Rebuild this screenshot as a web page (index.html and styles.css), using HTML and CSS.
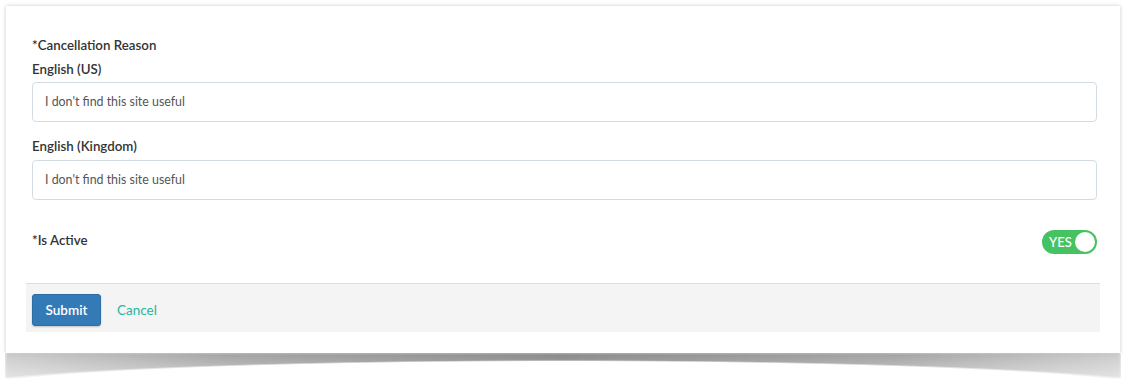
FILE: index.html
```html
<!DOCTYPE html>
<html lang="en">
<head>
<meta charset="utf-8">
<title>Cancellation Reason</title>
<link rel="stylesheet" href="styles.css">
</head>
<body>
<div class="page">
  <form class="card">
    <div class="section-title">*Cancellation Reason</div>
    <label class="label">English (US)</label>
    <div class="input">I don't find this site useful</div>
    <label class="label label-gap">English (Kingdom)</label>
    <div class="input">I don't find this site useful</div>
    <div class="active-row">
      <span class="label">*Is Active</span>
      <span class="toggle"><span class="toggle-text">YES</span><span class="knob"></span></span>
    </div>
    <div class="footer">
      <button type="button" class="btn-submit">Submit</button>
      <a class="cancel">Cancel</a>
    </div>
  </form>
</div>
</body>
</html>
```
FILE: styles.css
```css
html {
  background: #fff;
}
body {
  margin: 0;
  font-family: Lato, "Open Sans", "Liberation Sans", sans-serif;
  color: #333;
}
.page {
  padding: 6px 14px 30px 6px;
}
.card {
  position: relative;
  display: block;
  background: #fff;
  padding: 29px 23px 21px 26px;
  box-shadow: 0 0 4px rgba(0, 0, 0, 0.22);
}
/* curved drop shadow under the card */
.card::after {
  content: "";
  position: absolute;
  z-index: -1;
  left: -1px;
  right: -1px;
  top: 100%;
  height: 26px;
  background:
    linear-gradient(to bottom, rgba(255, 255, 255, 0) 15%, rgba(255, 255, 255, 0.45)),
    linear-gradient(to right, #cfcfcf, #a8a8a8 20%, #8e8e8e 50%, #a8a8a8 80%, #cfcfcf);
  -webkit-mask: radial-gradient(ellipse 620px 30px at 50% 37px, transparent 95%, #000 100%);
  mask: radial-gradient(ellipse 620px 30px at 50% 37px, transparent 95%, #000 100%);
  filter: blur(1.6px);
}
.section-title,
.label {
  display: block;
  font-size: 13.3px;
  line-height: 20px;
  font-weight: 600;
  color: #333;
}
.section-title {
  margin-bottom: 4px;
}
.label {
  margin-bottom: 3px;
}
.label-gap {
  margin-top: 14px;
  margin-bottom: 4px;
}
.input {
  box-sizing: border-box;
  height: 40px;
  border: 1px solid #d2dde3;
  border-radius: 4px;
  padding: 0 12px;
  font-size: 12.4px;
  line-height: 38px;
  color: #555;
}
.active-row {
  display: flex;
  justify-content: space-between;
  align-items: flex-start;
  margin-top: 30px;
  height: 24px;
}
.active-row .label {
  margin: 0;
}
.toggle {
  box-sizing: border-box;
  width: 55px;
  height: 24px;
  border-radius: 12px;
  background: #46c262;
  display: flex;
  align-items: center;
  justify-content: space-between;
  padding: 0 2px 0 7px;
}
.toggle-text {
  color: #fff;
  font-size: 13px;
  font-weight: 500;
}
.knob {
  width: 20px;
  height: 20px;
  border-radius: 50%;
  background: #fff;
}
.footer {
  display: flex;
  align-items: center;
  gap: 16px;
  margin: 29px -3px 0 -6px;
  padding: 10px 6px 6px 6px;
  background: #f4f4f4;
  border-top: 1px solid #dddddd;
}
.btn-submit {
  height: 32px;
  width: 69px;
  padding: 0;
  border: 1px solid #2e6da4;
  border-radius: 3px;
  background: #337ab7;
  color: #fff;
  font-family: inherit;
  font-size: 13.5px;
  font-weight: 600;
  box-shadow: 0 1px 2px rgba(0, 0, 0, 0.2);
}
.cancel {
  color: #22b8a0;
  font-size: 13.5px;
  text-decoration: none;
}
```
